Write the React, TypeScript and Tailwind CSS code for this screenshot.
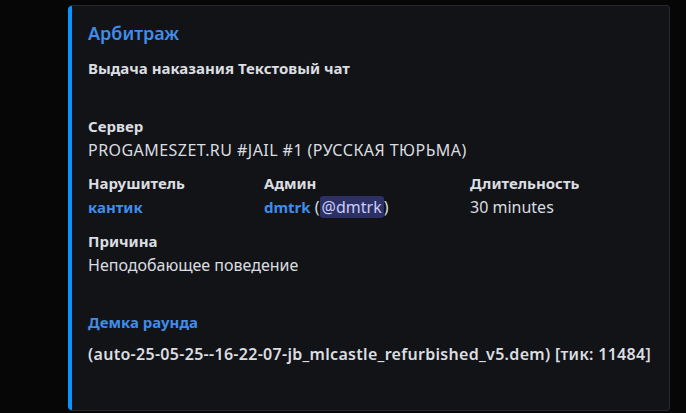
export default function App() {
  return (
    <div className="min-h-[413px] w-[686px] bg-[#060607] pt-[5px] font-['Noto_Sans',sans-serif]">
      <div className="ml-[68px] flex h-[406px] w-[602px] rounded-[4px] border border-l-0 border-[#27282d] bg-[#121316]">
        <div className="w-[4px] shrink-0 rounded-l-[4px] bg-[#0a94fd]" />
        <div className="flex flex-col pl-[16px] pt-[15px]">
          <div className="text-[18px] font-semibold leading-[24px] text-[#3f8cea]">Арбитраж</div>
          <div className="mt-[11px] text-[15px] font-bold leading-[24px] text-[#dbdee1]">
            Выдача наказания Текстовый чат
          </div>

          <div className="mt-[34px] text-[15px] font-bold leading-[24px] text-[#dbdee1]">Сервер</div>
          <div className="text-[16px] leading-[24px] tracking-[0.45px] text-[#dbdee1]">
            PROGAMESZET.RU #JAIL #1 (РУССКАЯ ТЮРЬМА)
          </div>

          <div className="mt-[9px] flex leading-[24px]">
            <div className="w-[176px]">
              <div className="text-[15px] font-bold text-[#dbdee1]">Нарушитель</div>
              <div className="text-[15px] font-bold text-[#3f8cea]">кантик</div>
            </div>
            <div className="w-[206px]">
              <div className="text-[15px] font-bold text-[#dbdee1]">Админ</div>
              <div className="text-[16px] text-[#dbdee1]">
                <span className="text-[15px] font-bold text-[#3f8cea]">dmtrk</span> (
                <span className="rounded-[3px] bg-[#2c3062] px-[2px] text-[#c9cdfb]">@dmtrk</span>)
              </div>
            </div>
            <div>
              <div className="text-[15px] font-bold text-[#dbdee1]">Длительность</div>
              <div className="text-[16px] text-[#dbdee1]">30 minutes</div>
            </div>
          </div>

          <div className="mt-[10px] text-[15px] font-bold leading-[24px] text-[#dbdee1]">Причина</div>
          <div className="text-[16px] leading-[24px] text-[#dbdee1]">Неподобающее поведение</div>

          <div className="mt-[33px] text-[15px] font-bold leading-[24px] text-[#3f8cea]">Демка раунда</div>
          <div className="mt-[8px] text-[16px] font-semibold leading-[24px] tracking-[0.3px] text-[#dbdee1]">
            (auto-25-05-25--16-22-07-jb_mlcastle_refurbished_v5.dem) [тик: 11484]
          </div>
        </div>
      </div>
    </div>
  );
}
